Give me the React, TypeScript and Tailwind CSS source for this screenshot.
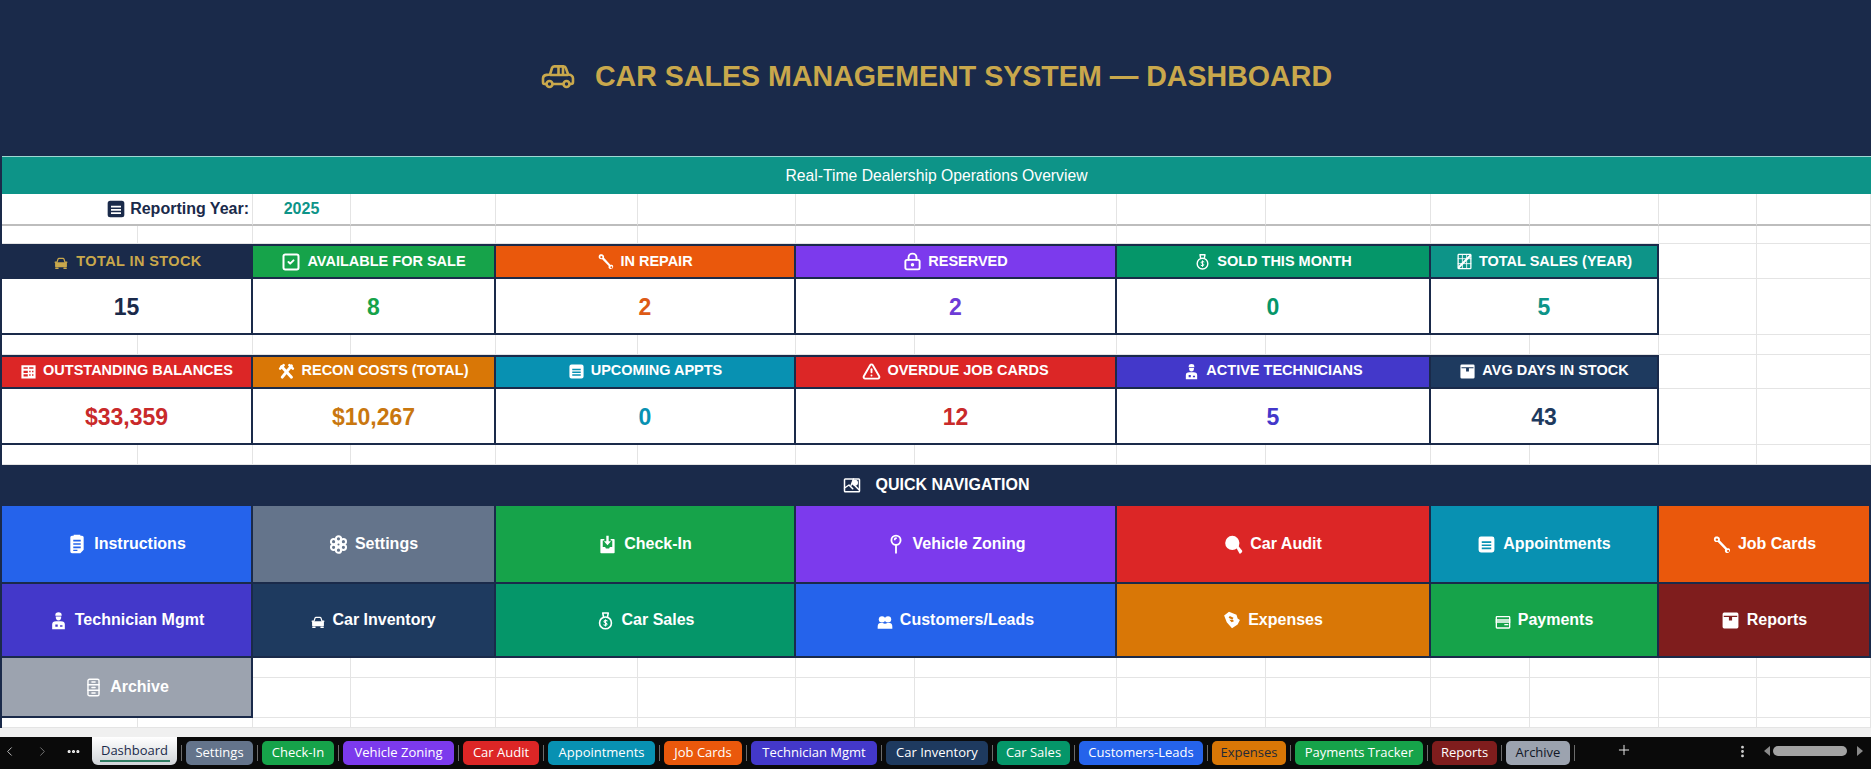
import React from "react";
import { TriangleAlert, SquareCheck, LockKeyhole, Plus, ChevronLeft, ChevronRight, EllipsisVertical, Ellipsis } from "lucide-react";

type IconProps = { className?: string };
const base = { viewBox: "0 0 24 24", fill: "none", stroke: "currentColor", strokeWidth: 2, strokeLinecap: "round" as const, strokeLinejoin: "round" as const };

const CarSide = ({ className }: IconProps) => (
  <svg viewBox="0 0 34 24" fill="none" stroke="currentColor" strokeWidth="2.600" strokeLinejoin="round" strokeLinecap="round" className={className}>
    <path d="M5 19H3.500Q2 19 2 17v-3.500q0-3 3.500-3.600L9 9.500 11 3q.5-1.600 2.200-1.600H22.500q1.800 0 2.300 1.600l2.400 6.500q4.800 .5 4.800 4V17q0 2-2 2H29" />
    <path d="M12 19h10M9.500 10h17M17.500 2v8M22 2v8" />
    <circle cx="8.500" cy="19" r="3" />
    <circle cx="25.500" cy="19" r="3" />
  </svg>
);
const CarFront = ({ className }: IconProps) => (
  <svg {...base} strokeWidth={2.2} className={className}>
    <path d="M5 11l2-6q.4-1 1.500-1h7q1.100 0 1.500 1l2 6" />
    <path d="M3 12h18v6H3zM2 10.500h2M20 10.500h2" fill="currentColor" />
    <path d="M3 21h4M17 21h4M9 15h6" />
  </svg>
);
const Wrench = ({ className }: IconProps) => (
  <svg viewBox="0 0 24 24" fill="currentColor" className={className}>
    <path d="M4 2.200c2.200-.9 5-.2 5.800 2 .3 1 .2 2 .1 2.600l9.300 10c1.200-.3 2.800-.2 3.400 1.300.6 1.700-.2 3.600-1.800 4.300-1.500.5-3.800 0-4.400-1.700-.3-.9-.1-1.800.2-2.400L7.300 8.800c-1.300.3-3 .3-4.100-.9C1.800 6.400 2.300 3 4 2.200zm1 2.400L4.600 6.200l1.300 1.100 1.500-.4.300-1.500-1.200-1.100L5 4.600zM19.900 18.800l-1.100 1 .5 1.500 1.500.2.900-1.100-.4-1.300-1.400-.3z" fillRule="evenodd" />
  </svg>
);
const MoneyBag = ({ className }: IconProps) => (
  <svg {...base} strokeWidth={2} className={className}>
    <path d="M9.500 7.500L8.500 2.500h7l-1 5" />
    <circle cx="12" cy="15" r="7.500" />
    <path d="M14 12.500q-2-1.200-3.500 0c-1 1 0 2 1.500 2.500s2.500 1.500 1.500 2.500q-1.500 1.200-3.500 0M12 11v8" strokeWidth={1.400} />
  </svg>
);
const ChartGrid = ({ className }: IconProps) => (
  <svg {...base} strokeWidth={1.800} className={className}>
    <rect x="3" y="2" width="18" height="20" rx="1" />
    <path d="M3 8h18M3 15h18M9 2v20M15 2v20" strokeWidth={1.200} />
    <path d="M4 20L20 4" strokeWidth={3} />
  </svg>
);
const Receipt = ({ className }: IconProps) => (
  <svg viewBox="0 0 24 24" fill="currentColor" className={className}>
    <path fillRule="evenodd" d="M2 3h20v19H2zM5 6v2h6V6zm8 0v2h6V6zM5 11v3h6v-3zm8 0v2h2v-2zm4 0v2h2v-2zM5 16v3h6v-3zm8 0v2h2v-2zm4 0v2h2v-2z" />
  </svg>
);
const Tools = ({ className }: IconProps) => (
  <svg {...base} strokeWidth={4.200} className={className}>
    <path d="M5 5l14 15M19 4L6 20" />
    <path d="M3 8l5-5M16 3l5 5" strokeWidth={3.600} />
  </svg>
);
const Calendar = ({ className }: IconProps) => (
  <svg viewBox="0 0 24 24" fill="currentColor" className={className}>
    <path fillRule="evenodd" d="M5 2h14a3 3 0 013 3v14a3 3 0 01-3 3H5a3 3 0 01-3-3V5a3 3 0 013-3zm1 6v2.200h12V8zm0 4v2h12v-2zm0 3.800V18h12v-2.200z" />
  </svg>
);
const Tech = ({ className }: IconProps) => (
  <svg viewBox="0 0 24 24" fill="currentColor" className={className}>
    <path d="M8 5q0-3.500 4-3.500T16 5v1H8z" />
    <path d="M8.500 7h7q0 5-3.500 5T8.500 7z" />
    <path fillRule="evenodd" d="M4 23v-6q0-4 5-4h6q5 0 5 4v6zm4-6v3h3v-3zm6 1v2h3v-2z" />
  </svg>
);
const Box = ({ className }: IconProps) => (
  <svg viewBox="0 0 24 24" fill="currentColor" className={className}>
    <path fillRule="evenodd" d="M4 2h16a2 2 0 012 2v16a2 2 0 01-2 2H4a2 2 0 01-2-2V4a2 2 0 012-2zm-.5 4v1.500H10V12h4V7.500h6.500V6z" />
  </svg>
);
const MapIco = ({ className }: IconProps) => (
  <svg {...base} strokeWidth={2} className={className}>
    <rect x="2" y="4" width="20" height="17" rx="1" />
    <path d="M2 16l6-4 5 5M12 9l9 9M14 4l-3 8" />
    <circle cx="16" cy="9" r="3" fill="currentColor" />
  </svg>
);
const Clip = ({ className }: IconProps) => (
  <svg viewBox="0 0 24 24" fill="currentColor" className={className}>
    <path fillRule="evenodd" d="M6 2h2V1h8v1h2a2 2 0 012 2v15l-4 4H6a2 2 0 01-2-2V4a2 2 0 012-2zm1.500 5v2h9V7zm0 4v2h9v-2zm0 4v2h9v-2zm0 4v1.500h5V19z" />
  </svg>
);
const Flower = ({ className }: IconProps) => (
  <svg viewBox="0 0 24 24" fill="none" stroke="currentColor" strokeWidth="2.600" className={className}>
    <circle cx="12" cy="4.800" r="3.300" />
    <circle cx="12" cy="19.200" r="3.300" />
    <circle cx="5.800" cy="8.400" r="3.300" />
    <circle cx="18.200" cy="8.400" r="3.300" />
    <circle cx="5.800" cy="15.600" r="3.300" />
    <circle cx="18.200" cy="15.600" r="3.300" />
    <circle cx="12" cy="12" r="2.600" />
  </svg>
);
const Inbox = ({ className }: IconProps) => (
  <svg viewBox="0 0 24 24" fill="currentColor" className={className}>
    <path fillRule="evenodd" d="M4 5h4v2H6v8h3l1 2h4l1-2h3V7h-2V5h4a1 1 0 011 1v16a1 1 0 01-1 1H4a1 1 0 01-1-1V6a1 1 0 011-1z" />
    <path d="M10.500 1h3v7h3l-4.500 5-4.500-5h3z" />
  </svg>
);
const Pin = ({ className }: IconProps) => (
  <svg {...base} strokeWidth={2.200} className={className}>
    <circle cx="12" cy="7.500" r="5.500" />
    <path d="M12 13v9.500M10.500 6.500q0-1.500 1.500-1.500" />
  </svg>
);
const Search = ({ className }: IconProps) => (
  <svg viewBox="0 0 24 24" fill="currentColor" className={className}>
    <circle cx="10.500" cy="10" r="9" />
    <path d="M15 15l3-1.500 5 6.500q.5 1-1 2.500t-2.500 1z" />
  </svg>
);
const People = ({ className }: IconProps) => (
  <svg viewBox="0 0 24 24" fill="currentColor" className={className}>
    <circle cx="7.500" cy="8" r="4.800" />
    <circle cx="16.500" cy="8" r="4.800" />
    <path d="M1 22v-3q0-5 4-5.500h3.500q2 1 3.500 1 1.500 0 3.500-1H19q4 .5 4 5.500v3z" />
  </svg>
);
const Wing = ({ className }: IconProps) => (
  <svg viewBox="0 0 24 24" fill="currentColor" className={className}>
    <path fillRule="evenodd" d="M8 1l10 4 1.500 5 3 2-3 6-7.500 5-7-8-3.500-9L8 1zm1 5.500L7.500 9l5 2.500 1.500-2.500zm-.5 5l3 3.500 3-1.500-1-1.500z" />
  </svg>
);
const Card = ({ className }: IconProps) => (
  <svg {...base} strokeWidth={2} strokeLinecap="square" className={className}>
    <rect x="2" y="4" width="20" height="17" rx="1" />
    <path d="M2 9h20M2 12h20M15 16h4" />
  </svg>
);
const Cabinet = ({ className }: IconProps) => (
  <svg {...base} strokeWidth={1.800} className={className}>
    <rect x="5" y="1.500" width="14" height="21" rx="2" />
    <path d="M5 8.500h14M5 15.500h14M10 5h4M10 12h4M10 19h4" />
  </svg>
);

const ICO: Record<string, React.FC<IconProps>> = {
  carFront: CarFront,
  check: ({ className }) => <SquareCheck strokeWidth={2.4} className={className} />,
  wrench: Wrench,
  lock: ({ className }) => <LockKeyhole strokeWidth={2.4} className={className} />,
  bag: MoneyBag,
  chart: ChartGrid,
  receipt: Receipt,
  tools: Tools,
  calendar: Calendar,
  alert: ({ className }) => <TriangleAlert strokeWidth={2.4} className={className} />,
  tech: Tech,
  box: Box,
  clip: Clip,
  flower: Flower,
  inbox: Inbox,
  pin: Pin,
  search: Search,
  people: People,
  wing: Wing,
  card: Card,
  cabinet: Cabinet,
};

const Icon = ({ name, className }: { name: string; className?: string }) => {
  const C = ICO[name];
  return <C className={className} />;
};

const Blank = () => <div className="border-r border-b border-[#e4e4e4]" />;
const blanks = (n: number, prefix: string) =>
  Array.from({ length: n }, (_, i) => <Blank key={`${prefix}${i}`} />);

type Kpi = { label: string; value: string; icon: string; bg: string; fg: string; labelColor?: string; iconSize?: string };

const row1: Kpi[] = [
  { label: "TOTAL IN STOCK", value: "15", icon: "carFront", bg: "bg-[#1a2a4a] gap-[8px] pl-[3px]", fg: "text-[#1a2a4a]", labelColor: "text-[#c9a84c] tracking-[0.4px]", iconSize: "size-[14px] mt-[3px]" },
  { label: "AVAILABLE FOR SALE", value: "8", icon: "check", bg: "bg-[#16a34a]", fg: "text-[#16a34a]", iconSize: "size-[20px]" },
  { label: "IN REPAIR", value: "2", icon: "wrench", bg: "bg-[#ea580c]", fg: "text-[#dd5a15]" },
  { label: "RESERVED", value: "2", icon: "lock", bg: "bg-[#7c3aed]", fg: "text-[#6d3bd6]", iconSize: "size-[19px]" },
  { label: "SOLD THIS MONTH", value: "0", icon: "bag", bg: "bg-[#059669]", fg: "text-[#059669]" },
  { label: "TOTAL SALES (YEAR)", value: "5", icon: "chart", bg: "bg-[#0d9488]", fg: "text-[#0d9488]" },
];
const row2: Kpi[] = [
  { label: "OUTSTANDING BALANCES", value: "$33,359", icon: "receipt", bg: "bg-[#dc2626] pb-[2px]", fg: "text-[#c92a2a]" },
  { label: "RECON COSTS (TOTAL)", value: "$10,267", icon: "tools", bg: "bg-[#d97706] pb-[2px]", fg: "text-[#c9770f]" },
  { label: "UPCOMING APPTS", value: "0", icon: "calendar", bg: "bg-[#0891b2] pb-[2px]", fg: "text-[#0891b2]" },
  { label: "OVERDUE JOB CARDS", value: "12", icon: "alert", bg: "bg-[#dc2626] pb-[2px]", fg: "text-[#c92a2a]", iconSize: "size-[19px]" },
  { label: "ACTIVE TECHNICIANS", value: "5", icon: "tech", bg: "bg-[#4338ca] pb-[2px]", fg: "text-[#4338ca]" },
  { label: "AVG DAYS IN STOCK", value: "43", icon: "box", bg: "bg-[#1e3a5f] pb-[2px]", fg: "text-[#1e3a5f]" },
];

type Nav = { label: string; icon: string; bg: string; iconSize?: string };
const nav1: Nav[] = [
  { label: "Instructions", icon: "clip", bg: "bg-[#2563eb]", iconSize: "size-[20px]" },
  { label: "Settings", icon: "flower", bg: "bg-[#64748b]", iconSize: "size-[19px]" },
  { label: "Check-In", icon: "inbox", bg: "bg-[#16a34a]", iconSize: "size-[19px]" },
  { label: "Vehicle Zoning", icon: "pin", bg: "bg-[#7c3aed]", iconSize: "size-[20px]" },
  { label: "Car Audit", icon: "search", bg: "bg-[#dc2626]", iconSize: "size-[19px]" },
  { label: "Appointments", icon: "calendar", bg: "bg-[#0891b2]", iconSize: "size-[19px]" },
  { label: "Job Cards", icon: "wrench", bg: "bg-[#ea580c]", iconSize: "size-[19px]" },
];
const nav2: Nav[] = [
  { label: "Technician Mgmt", icon: "tech", bg: "bg-[#4338ca]", iconSize: "size-[19px]" },
  { label: "Car Inventory", icon: "carFront", bg: "bg-[#1e3a5f]", iconSize: "size-[14px] mt-[4px]" },
  { label: "Car Sales", icon: "bag", bg: "bg-[#059669]", iconSize: "size-[19px]" },
  { label: "Customers/Leads", icon: "people", bg: "bg-[#2563eb]", iconSize: "size-[16px] mt-[3px]" },
  { label: "Expenses", icon: "wing", bg: "bg-[#d97706]", iconSize: "size-[18px]" },
  { label: "Payments", icon: "card", bg: "bg-[#16a34a]", iconSize: "size-[16px] mt-[4px]" },
  { label: "Reports", icon: "box", bg: "bg-[#7f1d1d]", iconSize: "size-[19px]" },
];

const tabs = [
  { label: "Settings", cls: "w-[67px] bg-[#64748b] text-white" },
  { label: "Check-In", cls: "w-[72px] bg-[#16a34a] text-white" },
  { label: "Vehicle Zoning", cls: "w-[111px] bg-[#7c3aed] text-white" },
  { label: "Car Audit", cls: "w-[76px] bg-[#dc2626] text-white" },
  { label: "Appointments", cls: "w-[107px] bg-[#0891b2] text-white" },
  { label: "Job Cards", cls: "w-[78px] bg-[#ea580c] text-white" },
  { label: "Technician Mgmt", cls: "w-[126px] bg-[#4338ca] text-white" },
  { label: "Car Inventory", cls: "w-[102px] bg-[#1e3a5f] text-white" },
  { label: "Car Sales", cls: "w-[73px] bg-[#059669] text-white" },
  { label: "Customers-Leads", cls: "w-[124px] bg-[#2563eb] text-white" },
  { label: "Expenses", cls: "w-[74px] bg-[#d97706] text-[#1f2937]" },
  { label: "Payments Tracker", cls: "w-[128px] bg-[#16a34a] text-white" },
  { label: "Reports", cls: "w-[65px] bg-[#7f1d1d] text-white" },
  { label: "Archive", cls: "w-[64px] bg-[#9ca3af] text-[#111827]" },
];

const KpiBlock = ({ items }: { items: Kpi[] }) => (
  <>
    {items.map((k) => (
      <div
        key={k.label}
        className={`col-span-2 flex items-center justify-center gap-[6px] border-2 border-l-0 border-[#1a2a4a] text-[14.5px] font-bold ${k.bg} ${k.labelColor ?? "text-white"}`}
      >
        <Icon name={k.icon} className={`shrink-0 ${k.iconSize ?? "size-[17px]"}`} />
        <span className="whitespace-nowrap">{k.label}</span>
      </div>
    ))}
    {blanks(2, "a")}
    {items.map((k) => (
      <div
        key={k.label + "v"}
        className={`col-span-2 flex items-center justify-center border-r-2 border-b-2 border-[#1a2a4a] bg-white pt-[2px] text-[23px] font-bold ${k.fg}`}
      >
        {k.value}
      </div>
    ))}
    {blanks(2, "b")}
  </>
);

const NavBlock = ({ items }: { items: Nav[] }) => (
  <>
    {items.map((n) => (
      <div
        key={n.label}
        className={`col-span-2 flex items-center justify-center gap-[7px] border-r-2 border-b-2 border-[#1a2a4a] text-[16px] font-bold text-white ${n.bg}`}
      >
        <Icon name={n.icon} className={`shrink-0 ${n.iconSize ?? "size-[17px]"}`} />
        <span className="whitespace-nowrap">{n.label}</span>
      </div>
    ))}
  </>
);

export default function App() {
  return (
    <div className="flex h-[769px] w-full flex-col overflow-hidden bg-white font-['Liberation_Sans',Arial,sans-serif]">
      <div className="grid grid-cols-[136px_115px_98px_145px_142px_158px_119px_202px_149px_165px_99px_129px_98px_114px] grid-rows-[157px_37px_32px_18px_35px_56px_20px_34px_56px_20px_41px_78px_74px_20px_40px_10px] border-l-2 border-[#1a2a4a]">
        <div className="col-span-14 flex items-center justify-center gap-[20px] border-b border-[#9fd8d2] bg-[#1a2a4a] pb-[3px] text-[28.6px] font-bold text-[#c9a84c]">
          <CarSide className="h-[24px] w-[34px]" />
          <span>CAR SALES MANAGEMENT SYSTEM — DASHBOARD</span>
        </div>
        <div className="col-span-14 flex items-center justify-center bg-[#0d9488] text-[15.7px] text-white">
          Real-Time Dealership Operations Overview
        </div>

        <div className="col-span-2 flex items-center justify-end gap-[4px] border-r border-b-2 border-r-[#e4e4e4] border-b-[#bdbdbd] pr-[3px] text-[16px] font-bold text-[#1a2a4a]">
          <Icon name="calendar" className="size-[20px]" />
          <span>Reporting Year:</span>
        </div>
        <div className="flex items-center justify-center border-r border-b-2 border-r-[#e4e4e4] border-b-[#bdbdbd] text-[16px] font-bold text-[#0d9488]">
          2025
        </div>
        {Array.from({ length: 11 }, (_, i) => (
          <div key={i} className="border-r border-b-2 border-r-[#e4e4e4] border-b-[#bdbdbd]" />
        ))}

        {blanks(14, "c")}
        <KpiBlock items={row1} />
        {blanks(14, "d")}
        <KpiBlock items={row2} />
        {blanks(14, "e")}

        <div className="col-span-14 flex items-center justify-center gap-[14px] bg-[#1a2a4a] pb-[2px] text-[16px] font-bold text-white">
          <MapIco className="size-[18px]" />
          <span>QUICK NAVIGATION</span>
        </div>
        <NavBlock items={nav1} />
        <NavBlock items={nav2} />

        <div className="col-span-2 row-span-2 flex items-center justify-center gap-[7px] border-r-2 border-b-2 border-[#1a2a4a] bg-[#9ca3af] text-[16px] font-bold text-white">
          <Icon name="cabinet" className="size-[19px]" />
          <span>Archive</span>
        </div>
        {blanks(12, "f")}
        {blanks(12, "g")}
        {blanks(14, "h")}
      </div>

      <div className="h-[9px] shrink-0 bg-[#f0f0f0]" />

      <div className="relative flex h-[32px] shrink-0 items-start bg-[#0a0a0a] font-['Open_Sans',sans-serif] text-[13px] text-[#d4d4d4]">
        <div className="flex h-[28px] w-[92px] shrink-0 items-center pl-[2px]">
          <ChevronLeft className="size-[15px] text-[#c4c4c4]" strokeWidth={1.500} />
          <ChevronRight className="ml-[18px] size-[15px] text-[#777777]" strokeWidth={1.500} />
          <Ellipsis className="ml-[16px] size-[15px] text-white" strokeWidth={3} />
        </div>
        <div className="flex h-[28px] w-[85px] shrink-0 flex-col items-center justify-center rounded-b-[6px] bg-gradient-to-b from-white to-[#d0d4d8] text-[#1a2a4a]">
          <span className="leading-[18px]">Dashboard</span>
          <span className="mt-[1px] h-[2px] w-[70px] bg-[#2f7d62]" />
        </div>
        {tabs.map((t) => (
          <div key={t.label} className="flex shrink-0 items-center pt-[4px]">
            <span className="mx-[4px] h-[16px] w-px bg-[#6b6b6b]" />
            <div className={`flex h-[24px] items-center justify-center rounded-[5px] ${t.cls}`}>{t.label}</div>
          </div>
        ))}
        <span className="mt-[8px] ml-[4px] h-[16px] w-px shrink-0 bg-[#6b6b6b]" />
        <Plus className="mt-[5px] ml-[41px] size-[16px] shrink-0 text-[#e5e5e5]" strokeWidth={1.500} />
        <EllipsisVertical className="mt-[7px] ml-[103px] size-[15px] shrink-0 text-[#d4d4d4]" strokeWidth={2.500} />
        <div className="mt-[6px] ml-[14px] flex h-[16px] flex-1 items-center">
          <span className="h-0 w-0 border-y-[5px] border-r-[6px] border-y-transparent border-r-[#8a8a8a]" />
          <span className="ml-[3px] h-[10px] w-[74px] rounded-full bg-[#a3a3a3]" />
          <span className="ml-[10px] h-0 w-0 border-y-[5px] border-l-[6px] border-y-transparent border-l-[#8a8a8a]" />
        </div>
      </div>
    </div>
  );
}
